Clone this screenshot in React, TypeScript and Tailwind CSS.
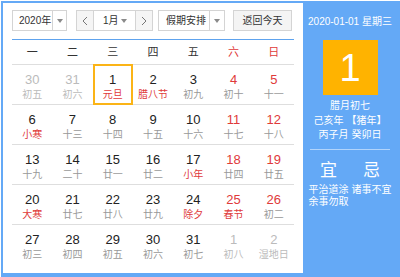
import React from "react";

type Day = { d: number; l: string; other?: boolean; red?: boolean; sel?: boolean };

const weeks: Day[][] = [
  [
    { d: 30, l: "初五", other: true },
    { d: 31, l: "初六", other: true },
    { d: 1, l: "元旦", red: true, sel: true },
    { d: 2, l: "腊八节", red: true },
    { d: 3, l: "初九" },
    { d: 4, l: "初十" },
    { d: 5, l: "十一" },
  ],
  [
    { d: 6, l: "小寒", red: true },
    { d: 7, l: "十三" },
    { d: 8, l: "十四" },
    { d: 9, l: "十五" },
    { d: 10, l: "十六" },
    { d: 11, l: "十七" },
    { d: 12, l: "十八" },
  ],
  [
    { d: 13, l: "十九" },
    { d: 14, l: "二十" },
    { d: 15, l: "廿一" },
    { d: 16, l: "廿二" },
    { d: 17, l: "小年", red: true },
    { d: 18, l: "廿四" },
    { d: 19, l: "廿五" },
  ],
  [
    { d: 20, l: "大寒", red: true },
    { d: 21, l: "廿七" },
    { d: 22, l: "廿八" },
    { d: 23, l: "廿九" },
    { d: 24, l: "除夕", red: true },
    { d: 25, l: "春节", red: true },
    { d: 26, l: "初二" },
  ],
  [
    { d: 27, l: "初三" },
    { d: 28, l: "初四" },
    { d: 29, l: "初五" },
    { d: 30, l: "初六" },
    { d: 31, l: "初七" },
    { d: 1, l: "初八", other: true },
    { d: 2, l: "湿地日", other: true },
  ],
];

const weekdays = ["一", "二", "三", "四", "五", "六", "日"];

function Caret() {
  return (
    <span className="w-0 h-0 border-l-[3px] border-r-[3px] border-t-[4px] border-l-transparent border-r-transparent border-t-[#8a8a8a]" />
  );
}

function Chevron({ dir }: { dir: "left" | "right" }) {
  return (
    <svg width="6" height="10" viewBox="0 0 6 10">
      <polyline
        points={dir === "left" ? "5,1 1,5 5,9" : "1,1 5,5 1,9"}
        fill="none"
        stroke="#777"
        strokeWidth="1"
      />
    </svg>
  );
}

function DayCell({ day, col }: { day: Day; col: number }) {
  const weekend = col >= 5;
  let numColor = "text-[#222]";
  if (day.other) numColor = "text-[#bbb]";
  else if (weekend) numColor = "text-[#e03a3a]";
  let lunarColor = "text-[#999]";
  if (day.other) lunarColor = "text-[#bbb]";
  else if (day.red) lunarColor = "text-[#e03a3a]";

  return (
    <div className="relative flex flex-col items-center pt-[7px]">
      {day.sel && (
        <div className="absolute -top-px -bottom-px left-0 right-0 border-2 border-[#fbb416]" />
      )}
      <span className={`text-[13px] leading-[16px] ${numColor}`}>{day.d}</span>
      <span className={`text-[10px] leading-[13px] ${lunarColor}`}>{day.l}</span>
    </div>
  );
}

export default function App() {
  return (
    <div className="w-[400px] h-[277px] bg-white pt-px pl-px font-['Liberation_Sans','Noto_Sans_CJK_SC',sans-serif] overflow-hidden">
      <div className="flex h-[276px] bg-[#64a9f6] pt-[2px] pl-[2px]">
        {/* left: calendar */}
        <div className="w-[300px] h-[270px] bg-white px-[9px] pt-[7px]">
          <div className="flex pb-[8px] border-b border-[#5ea3ee] text-[10px] text-[#333] whitespace-nowrap">
            <div className="flex h-[21px] w-[55px] border border-[#d4d4d4] bg-white">
              <span className="flex-1 pl-[6px] leading-[19px]">2020年</span>
              <span className="w-[14px] flex items-center justify-center border-l border-[#d4d4d4]">
                <Caret />
              </span>
            </div>
            <div className="flex h-[21px] w-[77px] ml-[9px] border border-[#d4d4d4] bg-white">
              <span className="w-[16px] flex items-center justify-center bg-[#f5f5f5]">
                <Chevron dir="left" />
              </span>
              <span className="flex-1 flex items-center border-l border-r border-[#d4d4d4] pl-[9px] pr-[8px]">
                <span className="flex-1 leading-[19px]">1月</span>
                <Caret />
              </span>
              <span className="w-[16px] flex items-center justify-center bg-[#f5f5f5]">
                <Chevron dir="right" />
              </span>
            </div>
            <div className="flex h-[21px] w-[67px] ml-[5px] border border-[#d4d4d4] bg-white">
              <span className="flex-1 pl-[7px] leading-[19px]">假期安排</span>
              <span className="w-[15px] flex items-center justify-center border-l border-[#d4d4d4]">
                <Caret />
              </span>
            </div>
            <div className="h-[21px] w-[59px] ml-[8px] border border-[#d4d4d4] bg-[#f4f4f4] text-center leading-[19px]">
              返回今天
            </div>
          </div>

          <div className="grid grid-cols-7 h-[25px] items-center border-b border-[#dedede] text-center text-[11px]">
            {weekdays.map((w, i) => (
              <span key={w} className={i >= 5 ? "text-[#e03a3a]" : "text-[#333]"}>
                {w}
              </span>
            ))}
          </div>

          {weeks.map((week, r) => (
            <div
              key={r}
              className={`grid grid-cols-7 h-[40px] ${r < weeks.length - 1 ? "border-b border-[#dedede]" : ""}`}
            >
              {week.map((day, c) => (
                <DayCell key={c} day={day} col={c} />
              ))}
            </div>
          ))}
        </div>

        {/* right: today detail */}
        <div className="flex-1 flex flex-col items-center pr-[3px] pt-[12px] text-white">
          <div className="text-[10px] leading-[14px] whitespace-nowrap">2020-01-01 星期三</div>
          <div className="mt-[11px] w-[55px] h-[55px] bg-[#ffb300] flex items-center justify-center text-[38px] leading-none">
            1
          </div>
          <div className="mt-[3px] text-[10px] leading-[15px] text-center whitespace-nowrap">
            <div>腊月初七</div>
            <div>己亥年 【猪年】</div>
            <div className="leading-[14px]">丙子月 癸卯日</div>
          </div>
          <div className="mt-[7px] w-[80px] h-px bg-white/50" />
          <div className="mt-[11px] w-[86px] grid grid-cols-2">
            <div className="flex flex-col items-center">
              <span className="text-[17px] leading-[20px]">宜</span>
              <span className="mt-[3px] w-[40px] text-[10px] leading-[12px]">平治道涂 余事勿取</span>
            </div>
            <div className="flex flex-col items-center">
              <span className="text-[17px] leading-[20px]">忌</span>
              <span className="mt-[3px] w-[40px] text-[10px] leading-[12px]">诸事不宜</span>
            </div>
          </div>
        </div>
      </div>
    </div>
  );
}
